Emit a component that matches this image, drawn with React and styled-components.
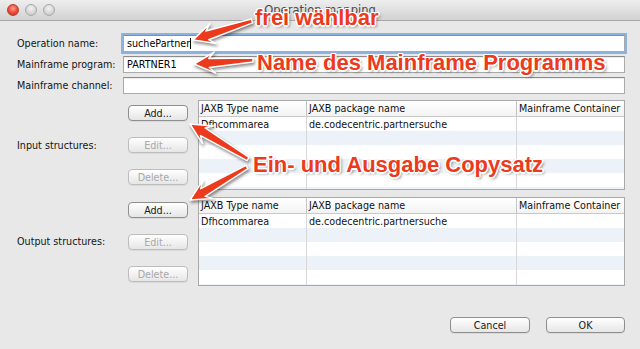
import React from 'react';
import styled, { createGlobalStyle } from 'styled-components';

const GlobalStyle = createGlobalStyle`
  html, body {
    margin: 0;
    padding: 0;
  }
  body {
    width: 640px;
    height: 349px;
    overflow: hidden;
    background: #e8e8e8;
    font-family: "DejaVu Sans", "Liberation Sans", sans-serif;
    color: #111;
  }
`;

const Window = styled.div`
  position: relative;
  width: 640px;
  height: 349px;
  display: flex;
  flex-direction: column;
  background: #e8e8e8;
  overflow: hidden;
`;

const TitleBar = styled.div`
  flex: none;
  height: 20px;
  display: grid;
  grid-template-columns: 1fr auto 1fr;
  align-items: center;
  background: linear-gradient(#eeeeee, #d2d2d2);
  border-bottom: 1px solid #a6a6a6;
`;

const Lights = styled.div`
  display: flex;
  gap: 6px;
  padding-left: 7px;
`;

const Light = styled.span`
  width: 12px;
  height: 12px;
  box-sizing: border-box;
  border-radius: 50%;
  border: 1px solid ${p => (p.$close ? '#b8402f' : '#a9a9a9')};
  background: ${p =>
    p.$close
      ? 'radial-gradient(circle at 50% 35%, #ff9c8c, #e5432e 60%, #c23a27)'
      : 'radial-gradient(circle at 50% 35%, #f4f4f4, #d4d4d4 60%, #c4c4c4)'};
`;

const Title = styled.div`
  font-size: 11.5px;
  color: #4a4a4a;
`;

const Body = styled.div`
  display: flex;
  flex-direction: column;
  padding: 14px 15px 0 17px;
  font-size: 9.6px;
`;

const Form = styled.div`
  display: grid;
  grid-template-columns: 106px 1fr;
  row-gap: 4px;
  align-items: center;
`;

const Label = styled.div`
  font-size: 9.6px;
  color: #141414;
  white-space: nowrap;
`;

const Field = styled.div`
  height: 17px;
  box-sizing: border-box;
  display: flex;
  align-items: center;
  padding: 0 3px;
  background: #fff;
  border: 1px solid #aaaaaa;
  border-top-color: #8c8c8c;
  box-shadow: ${p => (p.$focused ? '0 0 0 2px #8bb2e2' : 'inset 0 1px 1px rgba(0,0,0,0.08)')};
  font-size: 9.6px;
  color: #000;
`;

const Caret = styled.span`
  display: inline-block;
  width: 1px;
  height: 11px;
  background: #000;
`;

const Section = styled.div`
  display: grid;
  grid-template-columns: 106px 75px 1fr;
  align-items: center;
  height: ${p => p.$height}px;
  margin-top: ${p => p.$gap}px;
`;

const ButtonColumn = styled.div`
  align-self: start;
  display: flex;
  flex-direction: column;
  gap: 16px;
  padding: 5px 0 0 5px;
  width: 60px;
`;

const Button = styled.div`
  width: ${p => p.$width || 60}px;
  height: 16px;
  box-sizing: border-box;
  display: flex;
  align-items: center;
  justify-content: center;
  border-radius: 4px;
  border: 1px solid ${p => (p.$disabled ? '#bdbdbd' : '#8e8e8e')};
  background: linear-gradient(#ffffff, #f1f1f1 55%, #e6e6e6);
  box-shadow: 0 1px 0 rgba(0, 0, 0, 0.06);
  font-size: 9.6px;
  color: ${p => (p.$disabled ? '#a9a9a9' : '#1a1a1a')};
`;

const Table = styled.div`
  align-self: stretch;
  box-sizing: border-box;
  border: 1px solid #a9a9a9;
  background: #fff;
  overflow: hidden;
  display: flex;
  flex-direction: column;
`;

const Row = styled.div`
  flex: none;
  display: grid;
  grid-template-columns: 108px 210px 1fr;
  height: ${p => (p.$header ? 15 : 14)}px;
  background: ${p =>
    p.$header ? 'linear-gradient(#ffffff, #f3f3f3)' : p.$striped ? '#edf2f9' : '#ffffff'};
  border-bottom: ${p => (p.$header ? '1px solid #c9c9c9' : 'none')};
`;

const Cell = styled.div`
  display: flex;
  align-items: center;
  padding-left: 2px;
  border-right: ${p => (p.$last ? 'none' : `1px solid ${p.$header ? '#c4c4c4' : '#d8d8d8'}`)};
  font-size: 9.6px;
  color: #111;
  white-space: nowrap;
  overflow: hidden;
`;

const Footer = styled.div`
  display: flex;
  justify-content: flex-end;
  gap: 16px;
  margin-top: 31px;
`;

const Overlay = styled.div`
  position: absolute;
  inset: 0;
  pointer-events: none;
`;

const ArrowLayer = styled.svg`
  position: absolute;
  left: 0;
  top: 0;
  filter: drop-shadow(1px 2px 1.5px rgba(0, 0, 0, 0.45));
`;

const Callout = styled.div`
  position: absolute;
  left: ${p => p.$x}px;
  top: ${p => p.$y}px;
  font-family: "Liberation Sans", Arial, sans-serif;
  font-weight: bold;
  font-size: 22px;
  line-height: 22px;
  color: #ec3a1d;
  white-space: nowrap;
  text-shadow:
    -1.5px 0 0 #fff, 1.5px 0 0 #fff, 0 -1.5px 0 #fff, 0 1.5px 0 #fff,
    -1px -1px 0 #fff, 1px -1px 0 #fff, -1px 1px 0 #fff, 1px 1px 0 #fff,
    2px 2px 3px rgba(0, 0, 0, 0.45);
`;

const columns = ['JAXB Type name', 'JAXB package name', 'Mainframe Container'];
const data = [['Dfhcommarea', 'de.codecentric.partnersuche', '']];

function StructureTable() {
  const rows = [];
  for (let i = 0; i < 6; i++) rows.push(data[i] || ['', '', '']);
  return (
    <Table>
      <Row $header>
        {columns.map((c, i) => (
          <Cell key={c} $header $last={i === 2}>{c}</Cell>
        ))}
      </Row>
      {rows.map((r, i) => (
        <Row key={i} $striped={i % 2 === 1}>
          {r.map((c, j) => (
            <Cell key={j} $last={j === 2}>{c}</Cell>
          ))}
        </Row>
      ))}
    </Table>
  );
}

function Structures({ label, height, gap }) {
  return (
    <Section $height={height} $gap={gap}>
      <Label>{label}</Label>
      <ButtonColumn>
        <Button>Add...</Button>
        <Button $disabled>Edit...</Button>
        <Button $disabled>Delete...</Button>
      </ButtonColumn>
      <StructureTable />
    </Section>
  );
}

// skitch-style arrow: tapered shaft, swept-back head
function arrowPoints([x1, y1], [x2, y2]) {
  const dx = x2 - x1;
  const dy = y2 - y1;
  const L = Math.hypot(dx, dy);
  const ux = dx / L, uy = dy / L, nx = -uy, ny = ux;
  const H = 21, W = 10.5, neck = 15, w0 = 2, w1 = 4.5;
  const p = (a, b) => [x1 + ux * a + nx * b, y1 + uy * a + ny * b];
  return [p(0, w0), p(L - neck, w1), p(L - H, W), p(L, 0), p(L - H, -W), p(L - neck, -w1), p(0, -w0)]
    .map(q => q.map(v => v.toFixed(1)).join(','))
    .join(' ');
}

const arrows = [
  [[252, 21], [193, 40]],
  [[253, 60], [194, 64]],
  [[248, 159], [190, 124]],
  [[247, 167], [190, 200]],
];

function Annotations() {
  return (
    <Overlay>
      <ArrowLayer width="640" height="349" viewBox="0 0 640 349">
        {arrows.map(([a, b], i) => (
          <polygon
            key={i}
            points={arrowPoints(a, b)}
            fill="#ec3a1d"
            stroke="#fff"
            strokeWidth="1.5"
            strokeLinejoin="round"
          />
        ))}
      </ArrowLayer>
      <Callout $x={255} $y={7}>frei wählbar</Callout>
      <Callout $x={257} $y={52}>Name des Mainframe Programms</Callout>
      <Callout $x={253} $y={154}>Ein- und Ausgabe Copysatz</Callout>
    </Overlay>
  );
}

export default function App() {
  return (
    <Window>
      <GlobalStyle />
      <TitleBar>
        <Lights>
          <Light $close />
          <Light />
          <Light />
        </Lights>
        <Title>Operation mapping</Title>
        <div />
      </TitleBar>
      <Body>
        <Form>
          <Label>Operation name:</Label>
          <Field $focused>suchePartner<Caret /></Field>
          <Label>Mainframe program:</Label>
          <Field>PARTNER1</Field>
          <Label>Mainframe channel:</Label>
          <Field />
        </Form>
        <Structures label="Input structures:" height={90} gap={6} />
        <Structures label="Output structures:" height={89} gap={7} />
        <Footer>
          <Button $width={80}>Cancel</Button>
          <Button $width={79}>OK</Button>
        </Footer>
      </Body>
      <Annotations />
    </Window>
  );
}
